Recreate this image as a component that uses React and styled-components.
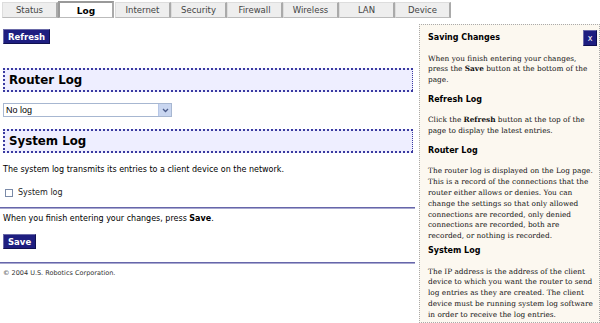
import React from 'react';
import styled, { createGlobalStyle } from 'styled-components';

const GlobalStyle = createGlobalStyle`
    html, body {
        margin: 0;
        padding: 0;
        background: #FFF;
    }
    body {
        width: 600px;
        height: 323px;
        overflow: hidden;
        font-family: "DejaVu Sans", Verdana, sans-serif;
        color: #000;
    }
`;

const Page = styled.div`
    display: flex;
    flex-direction: column;
    width: 600px;
`;

const TabBar = styled.div`
    display: flex;
    align-items: flex-end;
    height: 18px;
    padding-left: 2px;
`;

const Tab = styled.div`
    box-sizing: border-box;
    width: 56px;
    height: ${p => (p.active ? '17px' : '16px')};
    display: flex;
    align-items: center;
    justify-content: center;
    font-size: ${p => (p.active ? '9px' : '8.5px')};
    font-weight: ${p => (p.active ? 'bold' : 'normal')};
    color: ${p => (p.active ? '#000' : '#444')};
    background: ${p => (p.active ? '#FFF' : '#EEE')};
    border: 1px solid #CCC;
    border-top: ${p => (p.active ? '2px solid #999' : '1px solid #DDD')};
    border-left: ${p => (p.active ? '2px solid #999' : '1px solid #DDD')};
    border-right: 2px solid #AAA;
    border-bottom: 1px solid #BBB;
    margin-right: ${p => (p.active ? '1px' : '0')};
    padding-top: ${p => (p.active ? '2px' : '0')};
`;

const Body = styled.div`
    display: flex;
    align-items: flex-start;
    justify-content: space-between;
    padding-top: 4px;
`;

const Main = styled.div`
    width: 415px;
    display: flex;
    flex-direction: column;
`;

const NavyButton = styled.button`
    box-sizing: border-box;
    align-self: flex-start;
    margin: ${p => p.top}px 0 0 3px;
    height: 15px;
    padding: 0 4px;
    background: #1E1E80;
    color: #FFF;
    font-family: "DejaVu Sans", Verdana, sans-serif;
    font-size: 8.5px;
    font-weight: bold;
    border: 1px solid #101050;
    border-top-color: #6A6AA8;
    border-left-color: #6A6AA8;
    line-height: 12px;
    cursor: pointer;
`;

const SectionHead = styled.div`
    box-sizing: border-box;
    margin: ${p => p.top}px 2px 0 3px;
    height: 24px;
    display: flex;
    align-items: center;
    padding-left: 4px;
    background: #EEEEFF;
    border: 2px dotted #3A3AA0;
    border-width: 2px 1px 2px 2px;
    font-size: 11.8px;
    font-weight: bold;
`;

const SelectBox = styled.div`
    box-sizing: border-box;
    margin: 11px 0 0 3px;
    width: 169px;
    height: 14px;
    display: flex;
    align-items: center;
    border: 1px solid #A7B7D1;
    background: #FFF;
`;

const SelectText = styled.span`
    flex: 1;
    padding-left: 2px;
    font-family: "Liberation Sans", Arial, sans-serif;
    font-size: 9px;
    color: #000;
`;

const SelectArrow = styled.span`
    width: 12px;
    height: 12px;
    display: flex;
    align-items: center;
    justify-content: center;
    background: #C9D6F0;
    border-left: 1px solid #B7C7E6;
`;

const Text = styled.p`
    margin: ${p => p.top}px 0 0 3px;
    font-size: 8px;
    line-height: 10px;
`;

const CheckRow = styled.label`
    display: flex;
    align-items: center;
    gap: 5px;
    margin: 13px 0 0 5px;
    font-size: 8px;
    color: #222;
`;

const CheckBox = styled.span`
    box-sizing: border-box;
    width: 8px;
    height: 8px;
    border: 1px solid #7A8AA8;
    background: #FFF;
`;

const Rule = styled.div`
    height: 1px;
    background: #6666AA;
    margin-top: ${p => p.top}px;
    border-bottom: 1px solid #A8A8D0;
`;

const Copyright = styled.div`
    margin: 5px 0 0 3px;
    font-size: 6.5px;
    color: #333;
`;

const Help = styled.div`
    box-sizing: border-box;
    position: relative;
    width: 181px;
    height: 299px;
    margin-top: 2px;
    padding: 8px 4px 0 8px;
    overflow: hidden;
    background: #FCF8F0;
    border: 1px dotted #AAA;
`;

const CloseButton = styled.div`
    position: absolute;
    top: 5px;
    right: 2px;
    width: 14px;
    height: 16px;
    box-sizing: border-box;
    display: flex;
    align-items: center;
    justify-content: center;
    background: #1E1E80;
    border: 1px solid #0E0E50;
    border-top-color: #6A6AA8;
    border-left-color: #6A6AA8;
    color: #FFF;
    font-size: 8px;
`;

const HelpTitle = styled.div`
    font-size: 8px;
    font-weight: bold;
    line-height: 10px;
    margin-bottom: 10.5px;
`;

const HelpText = styled.p`
    margin: 0 0 ${p => (p.tight ? 4 : 9)}px 0;
    font-family: "DejaVu Serif", Georgia, serif;
    font-size: 7.35px;
    line-height: 10.8px;
    color: #111;
`;

const tabs = ['Status', 'Log', 'Internet', 'Security', 'Firewall', 'Wireless', 'LAN', 'Device'];

const Arrow = () => (
    <svg width="7" height="5" viewBox="0 0 7 5">
        <path d="M1 1 L3.5 3.5 L6 1" stroke="#4A5A88" strokeWidth="1.3" fill="none" />
    </svg>
);

export default function App() {
    return (
        <Page>
            <GlobalStyle />
            <TabBar>
                { tabs.map(t => <Tab key={t} active={t === 'Log'}>{t}</Tab>) }
            </TabBar>
            <Body>
                <Main>
                    <NavyButton top={7}>Refresh</NavyButton>
                    <SectionHead top={24}>Router Log</SectionHead>
                    <SelectBox>
                        <SelectText>No log</SelectText>
                        <SelectArrow><Arrow /></SelectArrow>
                    </SelectBox>
                    <SectionHead top={12}>System Log</SectionHead>
                    <Text top={12}>The system log transmits its entries to a client device on the network.</Text>
                    <CheckRow><CheckBox />System log</CheckRow>
                    <Rule top={10} />
                    <Text top={5}>When you finish entering your changes, press <b>Save</b>.</Text>
                    <NavyButton top={10}>Save</NavyButton>
                    <Rule top={13} />
                    <Copyright>© 2004 U.S. Robotics Corporation.</Copyright>
                </Main>
                <Help>
                    <CloseButton>x</CloseButton>
                    <HelpTitle>Saving Changes</HelpTitle>
                    <HelpText>When you finish entering your changes, press the <b>Save</b> button at the bottom of the page.</HelpText>
                    <HelpTitle>Refresh Log</HelpTitle>
                    <HelpText>Click the <b>Refresh</b> button at the top of the page to display the latest entries.</HelpText>
                    <HelpTitle>Router Log</HelpTitle>
                    <HelpText tight>The router log is displayed on the Log page. This is a record of the connections that the router either allows or denies. You can change the settings so that only allowed connections are recorded, only denied connections are recorded, both are recorded, or nothing is recorded.</HelpText>
                    <HelpTitle>System Log</HelpTitle>
                    <HelpText>The IP address is the address of the client device to which you want the router to send log entries as they are created. The client device must be running system log software in order to receive the log entries.</HelpText>
                </Help>
            </Body>
        </Page>
    );
}
